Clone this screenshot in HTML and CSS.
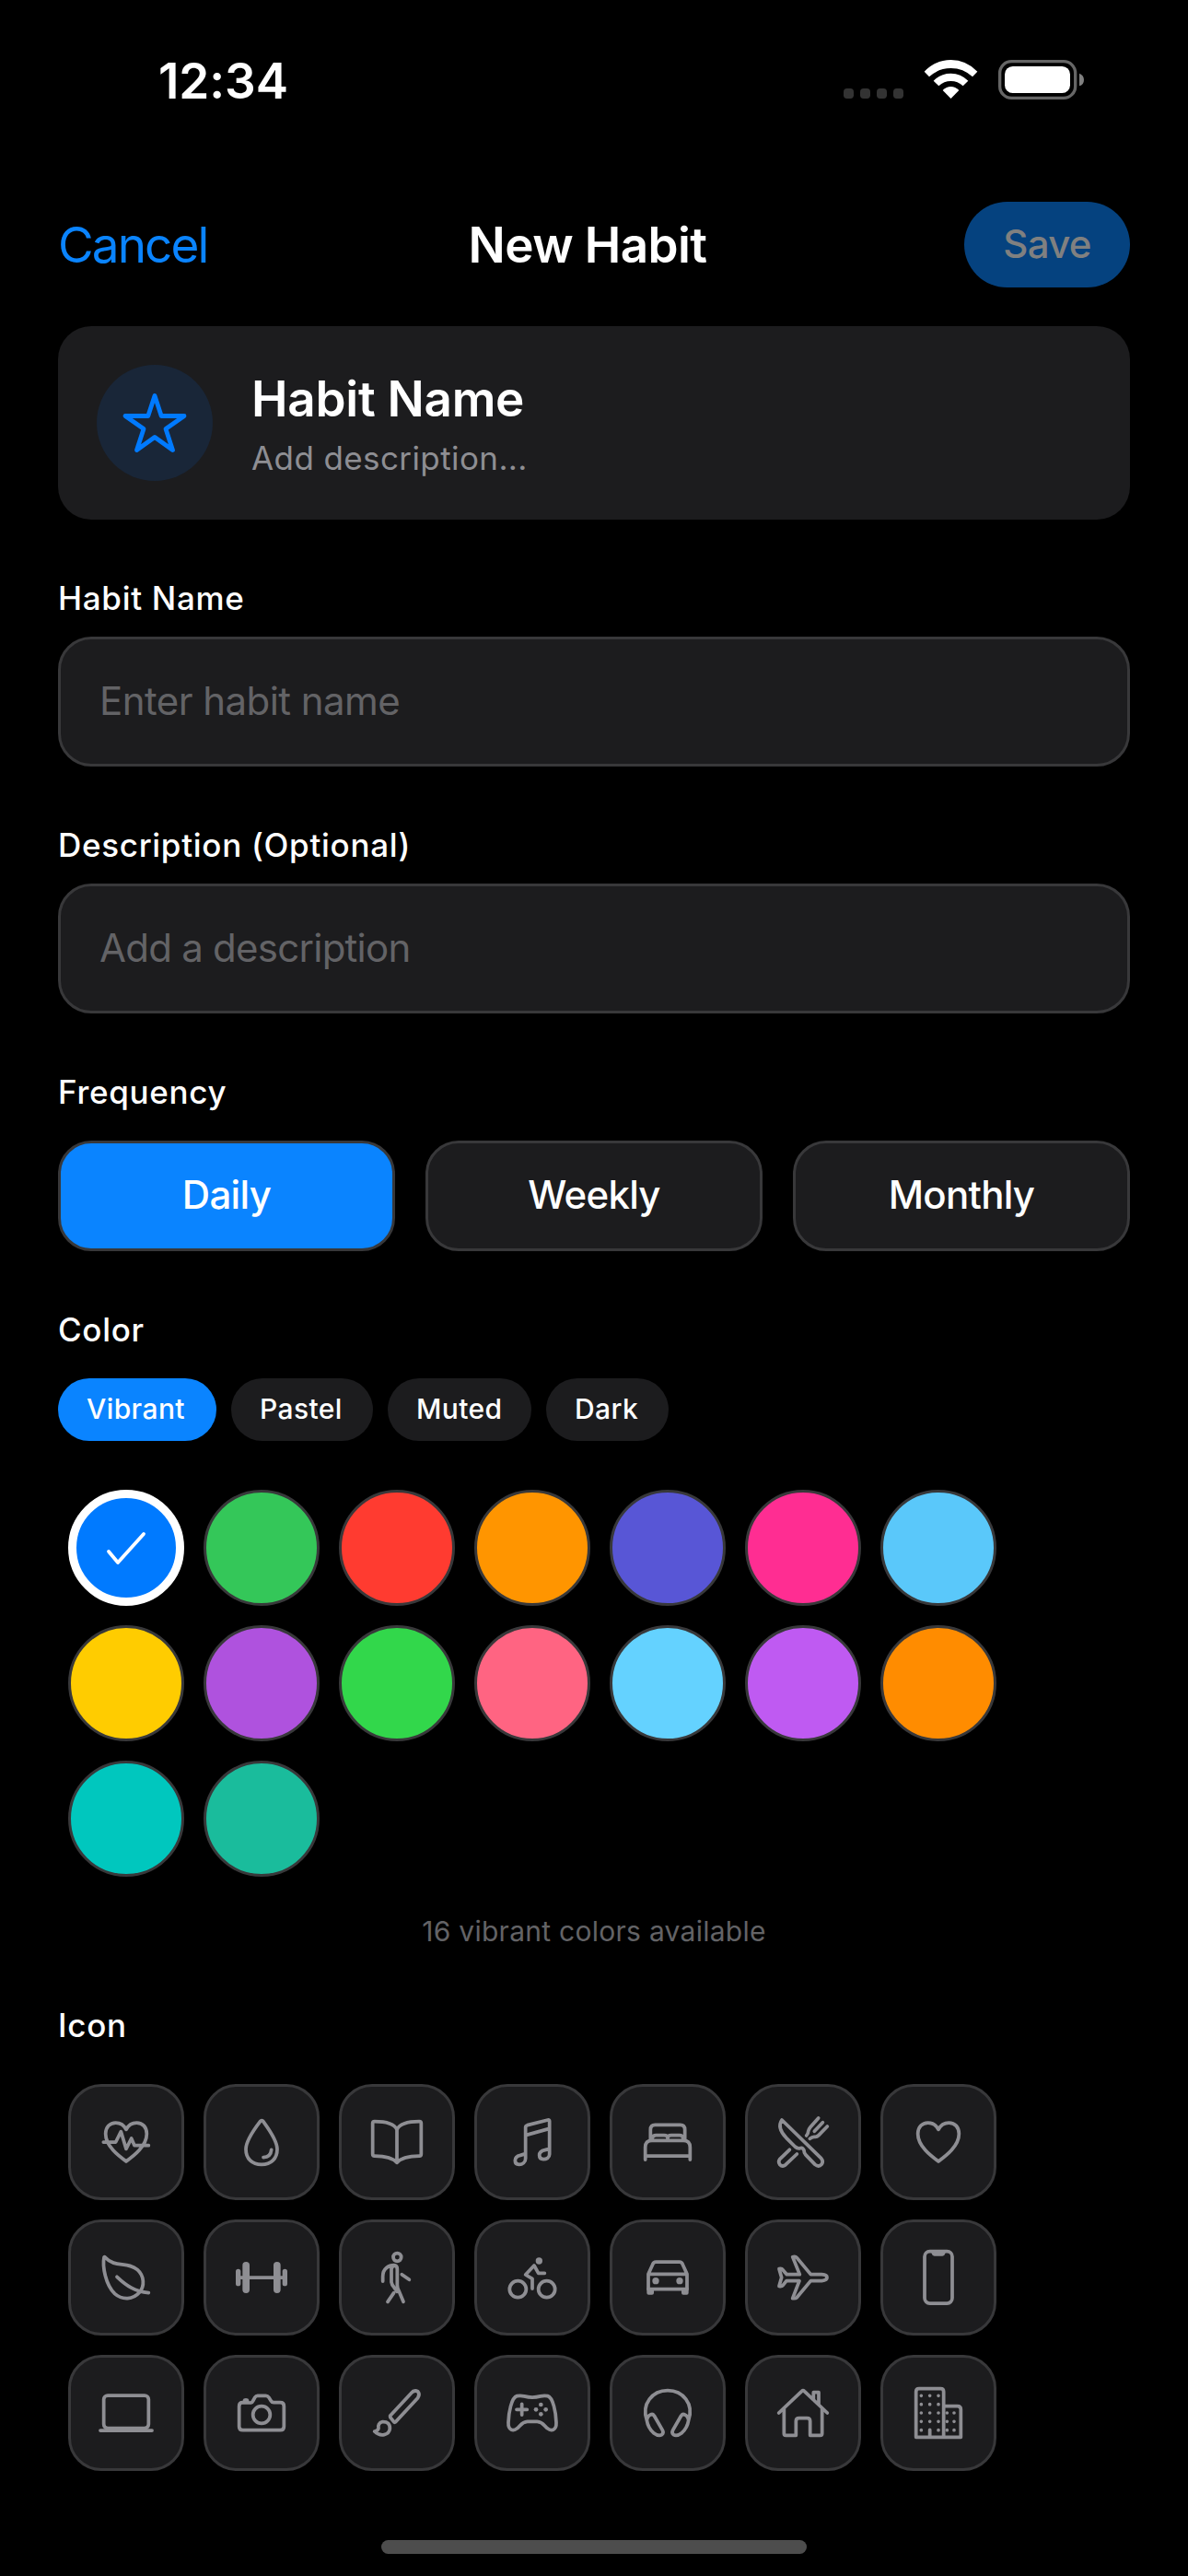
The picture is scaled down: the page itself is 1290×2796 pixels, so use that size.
FILE: index.html
```html
<!DOCTYPE html>
<html lang="en">
<head>
<meta charset="utf-8">
<title>New Habit</title>
<link rel="stylesheet" href="styles.css">
</head>
<body>
<div class="screen">
  <div class="status">
    <span class="time">12:34</span>
    <svg class="status-icons" width="264" height="50" viewBox="0 0 792 150">
      <g fill="#333"><rect x="18" y="105" width="33" height="33" rx="11"/><rect x="72" y="105" width="33" height="33" rx="11"/><rect x="126" y="105" width="33" height="33" rx="11"/><rect x="180" y="105" width="33" height="33" rx="11"/></g>
      <g fill="#fff"><path d="M281 50Q318 12 367.500 12T454 50L438 67Q408 39 367.500 39T297 67Z"/><path d="M311 80Q335 56 367.500 56T424 80L407 97Q390 81 367.500 81T328 97Z"/><path d="M341 111Q353 99 367.500 99T394 111L367.500 138Z"/><rect x="543" y="33" width="213" height="87" rx="26"/></g>
      <rect x="527" y="17" width="246" height="119" rx="38" fill="none" stroke="#666" stroke-width="10"/><path d="M786 56Q801 62 801 77T786 97Z" fill="#808080"/>
    </svg>
  </div>
  <header class="nav">
    <span class="cancel">Cancel</span>
    <span class="nav-title">New Habit</span>
    <span class="save">Save</span>
  </header>
  <main class="form">
    <section class="preview">
      <div class="badge"><svg width="126" height="126" viewBox="0 0 126 126"><path d="M63 33.500L70.200 55.500H95L75 69.500L82.500 92.500L63 78.500L43.500 92.500L51 69.500L31 55.500H55.800Z"/></svg></div>
      <div class="preview-text"><div class="preview-name">Habit Name</div><div class="preview-desc">Add description...</div></div>
    </section>
    <div class="label l-name">Habit Name</div>
    <div class="input p-name">Enter habit name</div>
    <div class="label l-desc">Description (Optional)</div>
    <div class="input p-desc">Add a description</div>
    <div class="label l-freq">Frequency</div>
    <div class="segments"><div class="segment active">Daily</div><div class="segment">Weekly</div><div class="segment">Monthly</div></div>
    <div class="label l-color">Color</div>
    <div class="chips"><span class="chip vibrant">Vibrant</span><span class="chip pastel">Pastel</span><span class="chip muted">Muted</span><span class="chip dark">Dark</span></div>
    <div class="swatches">
      <i class="swatch selected"><svg width="102" height="102" viewBox="0 0 102 102"><path d="M32 55L42 67L70 36"/></svg></i>
      <i class="swatch" style="background-color:#34c759"></i><i class="swatch" style="background-color:#ff3b30"></i><i class="swatch" style="background-color:#ff9500"></i><i class="swatch" style="background-color:#5856d6"></i><i class="swatch" style="background-color:#ff2d92"></i><i class="swatch" style="background-color:#5ac8fa"></i>
      <i class="swatch" style="background-color:#ffcc00"></i><i class="swatch" style="background-color:#af52de"></i><i class="swatch" style="background-color:#32d74b"></i><i class="swatch" style="background-color:#ff6482"></i><i class="swatch" style="background-color:#64d2ff"></i><i class="swatch" style="background-color:#bf5af2"></i><i class="swatch" style="background-color:#ff8c00"></i>
      <i class="swatch" style="background-color:#00c7be"></i><i class="swatch" style="background-color:#1abc9c"></i>
    </div>
    <div class="count">16 vibrant colors available</div>
    <div class="label l-icon">Icon</div>
    <div class="icons">
      <!-- fitness -->
      <div class="tile"><svg viewBox="51 45 360 360"><path d="M231 288C208 271 164 239 164 198C164 176 178 162 197 162C215 162 225 172 231 184C237 172 248 162 265 162C285 162 298 177 298 198C298 239 254 271 231 288ZM157 225H197L214 191L231 247L248 213L258 236H304"/></svg></div>
      <!-- water -->
      <div class="tile"><svg viewBox="492 45 360 360"><path d="M668 157Q672 152 677 157C692 178 723 218 723 248C723 279 703 298 672 298S621 279 621 248C621 218 652 178 668 157ZM704 250Q702 274 678 275"/></svg></div>
      <!-- book -->
      <div class="tile"><svg viewBox="33 45 360 360"><path d="M213 184C203 164 178 158 140 158Q134 158 134 164V264Q134 270 140 270C178 270 200 276 213 292C226 276 248 270 286 270Q292 270 292 264V164Q292 158 286 158C248 158 223 164 213 184ZM213 184V292"/></svg></div>
      <!-- musical notes -->
      <div class="tile"><svg viewBox="474 45 360 360"><path d="M632 265V177Q632 172 638 170L705 153Q710 152 710 157V265C710 276 700 281 690 281C682 281 677 276 677 268C677 257 686 253 695 251L710 247M632 203L710 181M632 265V278C632 291 622 298 611 298C603 298 598 293 598 285C598 275 606 270 615 268L632 263"/></svg></div>
      <!-- bed -->
      <div class="tile"><svg viewBox="45 45 360 360"><path d="M169 220V185Q169 169 184 169H266Q281 169 281 185V220M152 282V242Q152 220 174 220H276Q298 220 298 242V282M152 270H298M175 217V212Q177 203 187 203H213Q225 203 225 212M225 217V212Q225 203 237 203H263Q274 203 275 212V217"/></svg></div>
      <!-- restaurant -->
      <div class="tile"><svg viewBox="486 45 360 360"><path d="M597 153L725 278Q733 288 727 297Q717 308 705 298L674 266Q669 260 669 252Q665 242 656 245Q648 247 640 240L611 211Q580 178 597 153ZM622 250L590 281Q584 289 590 298Q599 307 609 299L646 264M677 204Q683 198 683 190Q684 183 690 176L716 147M703 190L730 161M745 174L717 203Q711 209 704 208Q696 207 688 214"/></svg></div>
      <!-- heart -->
      <div class="tile"><svg viewBox="57 45 360 360"><path d="M237 288C214 271 170 239 170 198C170 176 184 162 203 162C221 162 231 172 237 184C243 172 254 162 271 162C291 162 304 177 304 198C304 239 260 271 237 288Z"/></svg></div>
      <!-- leaf -->
      <div class="tile"><svg viewBox="51 486 360 360"><path d="M159 600C153 630 164 690 194 719C219 741 254 738 274 715C292 694 290 661 268 641C234 611 196 637 162 600Q160 597 159 600ZM201 664C233 694 259 711 304 716"/></svg></div>
      <!-- barbell -->
      <div class="tile"><svg viewBox="492 486 360 360"><path d="M594 666H750"/><path class="solid" d="M588 646Q588 638 596 638T604 646V686Q604 694 596 694T588 686ZM610 626Q610 615 621.500 615T633 626V706Q633 717 621.500 717T610 706ZM711 626Q711 615 722.500 615T734 626V706Q734 717 722.500 717T711 706ZM740 646Q740 638 748 638T756 646V686Q756 694 748 694T740 686Z"/></svg></div>
      <!-- walk -->
      <div class="tile"><svg viewBox="33 486 360 360"><circle cx="214" cy="600" r="13"/><path d="M167 678V662C167 637 187 626 203 626Q214 627 214 638V690Q214 699 219 709L234 745M195 631V681Q196 690 205 700L214 712M203 629Q198 628 195 639M229 656L253 673M183 745L203 716"/></svg></div>
      <!-- bicycle -->
      <div class="tile"><svg viewBox="474 486 360 360"><circle cx="607" cy="704" r="27"/><circle cx="701" cy="704" r="27"/><circle class="solid" cx="676" cy="612" r="11"/><path d="M654 702V670L632 657L660 627L674 652H694"/></svg></div>
      <!-- car -->
      <div class="tile"><svg viewBox="45 486 360 360"><path d="M162 655H288M162 655L177 622Q179 615 187 615H263Q271 615 273 622L288 655V704H162Z"/><path class="solid" d="M157 700H180V716Q180 722 174 722H163Q157 722 157 716ZM270 700H293V716Q293 722 287 722H276Q270 722 270 716Z"/><circle class="solid" cx="186" cy="677" r="11"/><circle class="solid" cx="264" cy="677" r="11"/></svg></div>
      <!-- airplane -->
      <div class="tile"><svg viewBox="486 486 360 360"><path d="M691 656H727Q744 657 744 666T727 677H691L645 732Q642 735 632 734L654 677H612L600 692Q596 696 588 694L596 666L588 638Q597 636 600 641L613 656H655L632 599Q641 596 646 602Z"/></svg></div>
      <!-- phone -->
      <div class="tile"><svg viewBox="57 486 360 360"><rect x="192" y="581" width="90" height="169" rx="17"/><path class="solid" d="M210 578H264L259 588Q257 596 250 596H224Q217 596 215 588Z"/></svg></div>
      <!-- laptop -->
      <div class="tile"><svg viewBox="51 927 360 360"><rect x="158" y="1050" width="146" height="107" rx="13"/><path d="M147 1164H315"/></svg></div>
      <!-- camera -->
      <div class="tile"><svg viewBox="492 927 360 360"><path d="M637 1074Q642 1073 644 1068L650 1057Q654 1051 659 1051H686Q692 1051 696 1057L703 1068Q706 1073 712 1073H733Q745 1073 745 1085V1151Q745 1163 733 1163H611Q599 1163 599 1151V1085Q599 1073 611 1073Z"/><circle cx="672" cy="1113" r="28"/><path class="solid" d="M611 1075V1065Q612 1059 621 1059T631 1065V1075Z"/></svg></div>
      <!-- brush -->
      <div class="tile"><svg viewBox="33 927 360 360"><path d="M203 1136L191 1121Q189 1118 192 1115L259 1043Q269 1031 281 1037Q289 1047 281 1058L210 1135Q206 1140 203 1136ZM166 1136C154 1138 151 1148 153 1157Q151 1166 140 1167C160 1187 187 1179 190 1159Q191 1135 166 1136Z"/></svg></div>
      <!-- game controller -->
      <div class="tile"><svg viewBox="474 927 360 360"><path d="M604 1052C624 1047 626 1056 654 1056S684 1047 704 1052C722 1057 731 1106 732 1138C733 1164 716 1168 703 1157C693 1150 689 1136 670 1135H638C619 1136 615 1150 605 1157C592 1168 575 1164 576 1138C577 1106 586 1057 604 1052ZM620 1078V1113M603 1096H637"/><g class="solid"><circle cx="682" cy="1080" r="7"/><circle cx="682" cy="1111" r="7"/><circle cx="666" cy="1096" r="7"/><circle cx="698" cy="1096" r="7"/></g></svg></div>
      <!-- headset -->
      <div class="tile"><svg viewBox="45 927 360 360"><path d="M157 1131C139 1078 175 1034 225 1034S311 1078 293 1131M157 1131Q161 1156 179 1172Q195 1184 206 1178Q213 1172 208 1163L181 1116Q176 1109 169 1113Q160 1116 157 1131ZM293 1131Q289 1156 271 1172Q255 1184 244 1178Q237 1172 242 1163L269 1116Q274 1109 281 1113Q290 1116 293 1131Z"/></svg></div>
      <!-- home -->
      <div class="tile"><svg viewBox="486 927 360 360"><path d="M604 1091V1174Q604 1180 610 1180H643V1134Q643 1124 653 1124H679Q689 1124 689 1134V1180H722Q728 1180 728 1174V1091M587 1107L662 1036Q666 1032 670 1036L745 1107M717 1079V1040H700V1064"/></svg></div>
      <!-- business -->
      <div class="tile"><svg viewBox="57 927 360 360"><path d="M164 1186V1038Q164 1028 174 1028H244Q254 1028 254 1038V1186M254 1085H299Q310 1085 310 1096V1186H164M209 1182V1162"/><path class="dots" d="M181 1051h0M209 1051h0M237 1051h0M181 1079h0M209 1079h0M237 1079h0M181 1107h0M209 1107h0M237 1107h0M265 1107h0M288 1107h0M181 1135h0M209 1135h0M237 1135h0M265 1135h0M288 1135h0M181 1163h0M237 1163h0M265 1163h0M288 1163h0"/></svg></div>
    </div>
  </main>
  <footer class="home-bar"></footer>
</div>
</body>
</html>
```
FILE: styles.css
```css
* { box-sizing: border-box; }
body { margin: 0; background: #000; color: #fff; font-family: Inter, "Liberation Sans", sans-serif; }
.screen { width: 1290px; height: 2796px; overflow: hidden; display: flex; flex-direction: column; }
.status { height: 177px; padding: 58px 116px 0 172px; display: flex; justify-content: space-between; align-items: flex-start; }
.time { font-size: 53px; line-height: 60px; font-weight: 600; letter-spacing: -0.1px; }
.status-icons { overflow: visible; margin-top: 3px; }
.nav { height: 177px; padding: 42px 63px 0; display: grid; grid-template-columns: 300px 1fr 300px; align-items: start; }
.cancel { font-size: 53px; line-height: 95px; color: #0a84ff; letter-spacing: -1.9px; }
.nav-title { font-size: 53px; line-height: 95px; font-weight: 600; text-align: center; letter-spacing: -0.6px; padding-right: 14px; }
.save { justify-self: end; width: 180px; height: 93px; border-radius: 47px; background: #05427f; color: #808080; font-size: 42px; line-height: 92px; font-weight: 500; text-align: center; letter-spacing: -0.7px; }
.form { padding: 0 63px; display: flex; flex-direction: column; }
.preview { height: 210px; border-radius: 36px; background: #1c1c1e; padding: 42px; display: flex; gap: 42px; }
.badge { width: 126px; height: 126px; border-radius: 50%; background: #192638; }
.badge svg { fill: none; stroke: #007aff; stroke-width: 4.8; stroke-linejoin: round; display: block; }
.preview-text { display: flex; flex-direction: column; padding-top: 4px; }
.preview-name { font-size: 53px; line-height: 66px; font-weight: 600; letter-spacing: -0.25px; }
.preview-desc { font-size: 35px; line-height: 44px; margin-top: 9px; color: #8e8e93; letter-spacing: 0.4px; }
.label { font-size: 35px; line-height: 42px; font-weight: 500; letter-spacing: 0.7px; }
.l-name { margin-top: 64px; }
.input { height: 141px; border: 3px solid #38383a; border-radius: 36px; background: #1c1c1e; color: #636366; font-size: 42px; line-height: 134px; padding-left: 42px; margin-top: 21px; }
.p-name { letter-spacing: -0.55px; }
.p-desc { letter-spacing: -0.75px; }
.l-desc, .l-freq { margin-top: 64px; }
.segments { display: grid; grid-template-columns: repeat(3, 1fr); gap: 33px; margin-top: 32px; }
.segment { height: 120px; border: 3px solid #38383a; border-radius: 36px; background: #1c1c1e; font-size: 42px; line-height: 112px; font-weight: 500; text-align: center; letter-spacing: -0.7px; }
.segment.active { background: #0a84ff; }
.l-color { margin-top: 64px; }
.chips { display: flex; gap: 16px; margin-top: 32px; }
.chip { height: 68px; border-radius: 34px; background: #1c1c1e; font-size: 30px; line-height: 67px; font-weight: 500; text-align: left; padding-left: 31px; letter-spacing: 0.4px; }
.vibrant { width: 172px; background: #0a84ff; }
.pastel { width: 154px; }
.muted { width: 156px; }
.dark { width: 133px; }
.swatches { display: grid; grid-template-columns: repeat(7, 126px); gap: 21px; padding-left: 11px; margin-top: 53px; }
.swatch { height: 126px; border-radius: 50%; border: 3px solid #38383a; }
.selected { background: #007aff; border: 9px solid #fff; display: grid; place-items: center; }
.selected svg { fill: none; stroke: #fff; stroke-width: 3.8; stroke-linecap: round; stroke-linejoin: round; }
.count { font-size: 30px; line-height: 36px; text-align: center; color: #636366; margin-top: 41px; letter-spacing: 0.27px; }
.l-icon { margin-top: 63px; }
.icons { display: grid; grid-template-columns: repeat(7, 126px); gap: 21px; padding-left: 11px; margin-top: 43px; }
.tile { height: 126px; border: 3px solid #38383a; border-radius: 36px; background: #1c1c1e; }
.tile svg { display: block; width: 120px; height: 120px; fill: none; stroke: #8e8e93; stroke-width: 11.25; stroke-linecap: round; stroke-linejoin: round; }
.tile .solid { fill: #8e8e93; stroke: none; }
.tile .dots { stroke-width: 11; }
.home-bar { width: 462px; height: 15px; border-radius: 8px; background: #4d4d4d; margin: auto auto 24px; flex: none; }
```
